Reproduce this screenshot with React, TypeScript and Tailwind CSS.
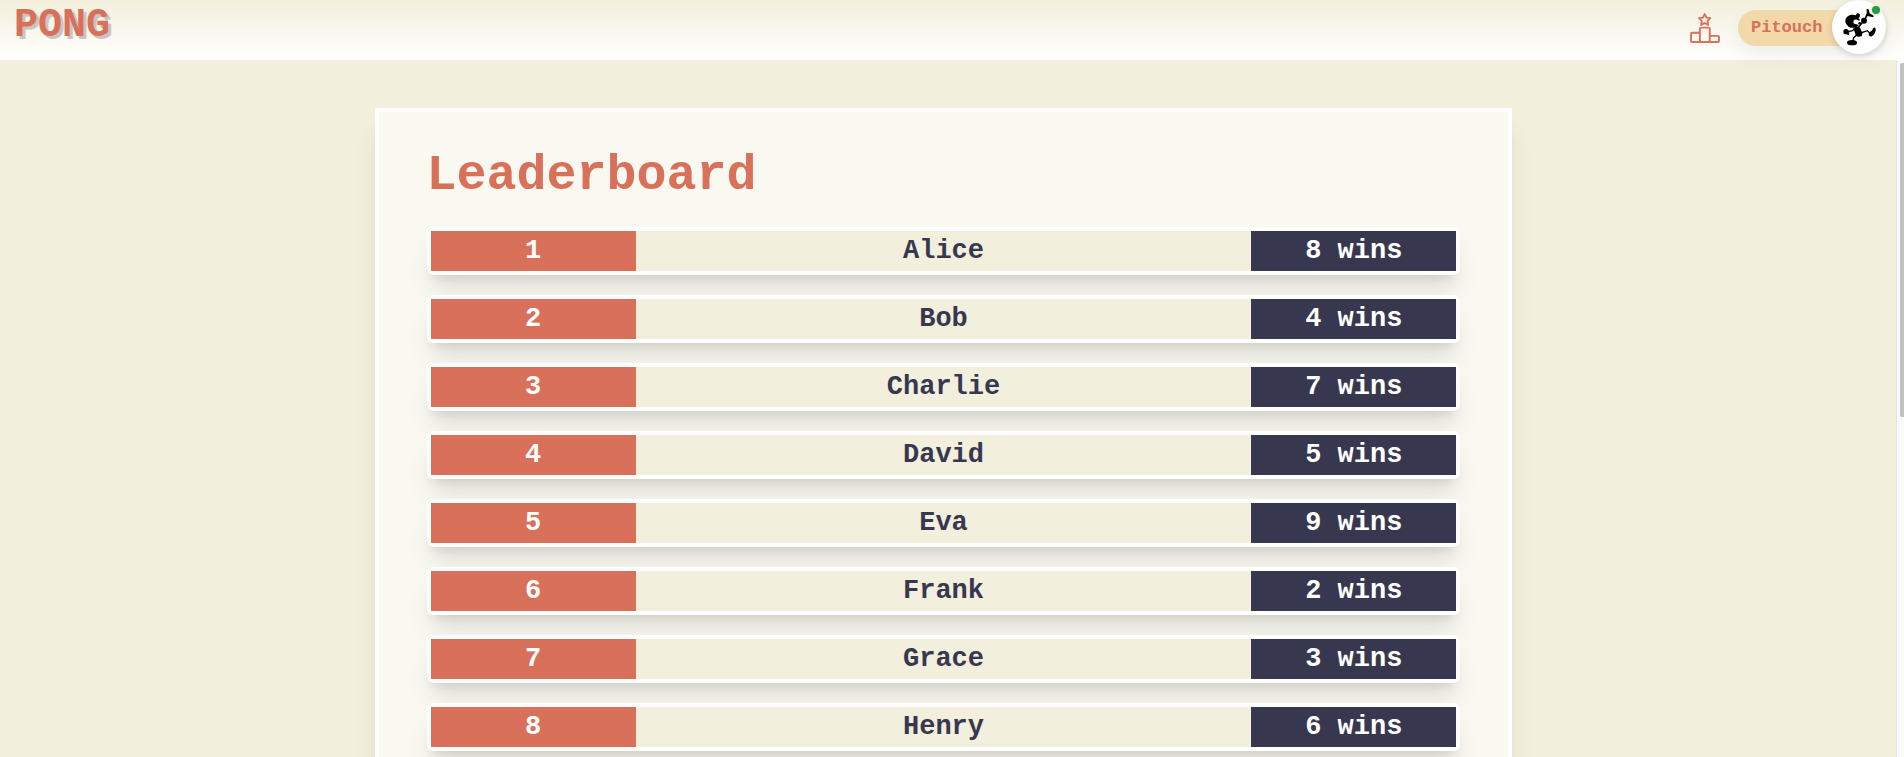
const players = [
  { name: "Alice", wins: 8 },
  { name: "Bob", wins: 4 },
  { name: "Charlie", wins: 7 },
  { name: "David", wins: 5 },
  { name: "Eva", wins: 9 },
  { name: "Frank", wins: 2 },
  { name: "Grace", wins: 3 },
  { name: "Henry", wins: 6 },
];

function PodiumIcon() {
  return (
    <svg
      viewBox="75 39 94 94"
      className="size-8"
      fill="none"
      stroke="currentColor"
      strokeWidth="5.5"
      strokeLinejoin="round"
      aria-hidden="true"
    >
      <path d="M121 45l5.200 10.600 11.400 1.600-8.300 8.100 2 11.600-10.300-5.500-10.300 5.500 2-11.600-8.300-8.100 11.400-1.600z" />
      <path d="M107 127V88q0-3 3-3h23q3 0 3 3v39" />
      <path d="M107 100H84q-3 0-3 3v21q0 3 3 3h76q3 0 3-3v-12q0-3-3-3h-24" />
    </svg>
  );
}

function Avatar() {
  return (
    <svg viewBox="0 0 162 162" className="size-full" aria-hidden="true">
      <path d="M62 44c-12 0-22 8-22 19 0 8 5 12 7 14 3 5 10 7 17 6 8 0 14-3 17-8l-8-2c-6 0-10-4-9-9 1-4 6-6 11-5l7 3 2-3-5-5c5-1 6-7 4-12l-7-3-5 7z" />
      <circle cx="83" cy="70" r="4" />
      <circle cx="96" cy="62" r="9" />
      <path d="M104 27l6 1 3 12 12 7-1 5-18-4-4 10-5-2 7-16z" />
      <path d="M64 84c6-5 16-5 20-1 3 5 4 11 8 15l-3 10c-6 4-15 3-18-3z" />
      <g fill="none" stroke="#000" strokeWidth="4" strokeLinecap="round">
        <path d="M96 62L78 84" />
        <path d="M68 87C62 92 56 95 49 94" />
        <path d="M86 99l20-7 10 9" />
        <path d="M75 104l-10 9-2 10" />
      </g>
      <circle cx="42" cy="95" r="8" />
      <path d="M44 98l8-1-1 8-5-1z" />
      <path d="M110 103c0-6 9-8 12-15 2-7 9-8 9-1 1 9-5 19-12 22-5 2-9-1-9-6z" />
      <ellipse cx="60" cy="128" rx="15" ry="8" />
    </svg>
  );
}

function Header() {
  return (
    <header className="relative z-10 flex h-15 shrink-0 items-start justify-between bg-linear-to-b from-[#f2efdc] to-white pr-[18px] pl-3.5">
      <a
        href="/"
        className="mt-1.5 text-[40px] leading-10 font-bold text-[#d8705a] [text-shadow:3px_3px_0_#c9c5c3]"
      >
        PONG
      </a>
      <div className="flex items-start gap-[17px]">
        <a href="/leaderboard" aria-label="Leaderboard" className="mt-3 text-[#d8705a]">
          <PodiumIcon />
        </a>
        <button
          type="button"
          className="relative mt-2.5 flex h-9 w-37 items-center rounded-full bg-[#f3d8a9] pl-[13px] text-[17px] font-bold text-[#d8705a] shadow-[0_10px_20px_rgba(0,0,0,0.06)]"
        >
          Pitouch
          <span className="absolute -top-2.5 right-0 size-[54px] rounded-full bg-white shadow-[0_2px_6px_rgba(0,0,0,0.15)]">
            <Avatar />
            <span className="absolute top-1 right-1 size-3 rounded-full border-2 border-[#f2efdc] bg-[#1f9d45]" />
          </span>
        </button>
      </div>
    </header>
  );
}

export default function App() {
  return (
    <div className="flex h-screen flex-col overflow-hidden bg-[#f3efdd] font-['Liberation_Mono',monospace]">
      <Header />
      <div className="flex min-h-0 flex-1">
        <main className="min-w-0 flex-1 overflow-hidden pt-12 pr-[9px]">
          <section className="mx-auto w-[60.3%] border-4 border-white bg-[#f9f9f1] p-12 shadow-xl">
            <h1 className="text-[50px] leading-8 font-bold text-[#d8705a]">Leaderboard</h1>
            <ol className="mt-[35px] flex flex-col gap-5">
              {players.map((player, index) => (
                <li
                  key={player.name}
                  className="grid grid-cols-5 rounded-md border-4 border-white bg-[#f2efdc] text-center text-[27px] leading-10 font-bold text-[#373850] shadow-xl"
                >
                  <span className="bg-[#d8705a] text-white">{index + 1}</span>
                  <span className="col-span-3">{player.name}</span>
                  <span className="bg-[#373850] text-white">{player.wins} wins</span>
                </li>
              ))}
            </ol>
          </section>
        </main>
        <div className="w-2 border-l border-[#e4e4e8] bg-[#fafafa] pt-[3px] pl-[3px]" aria-hidden="true">
          <div className="h-[51%] rounded-l-xs bg-[#c1c1c1]" />
        </div>
      </div>
    </div>
  );
}
